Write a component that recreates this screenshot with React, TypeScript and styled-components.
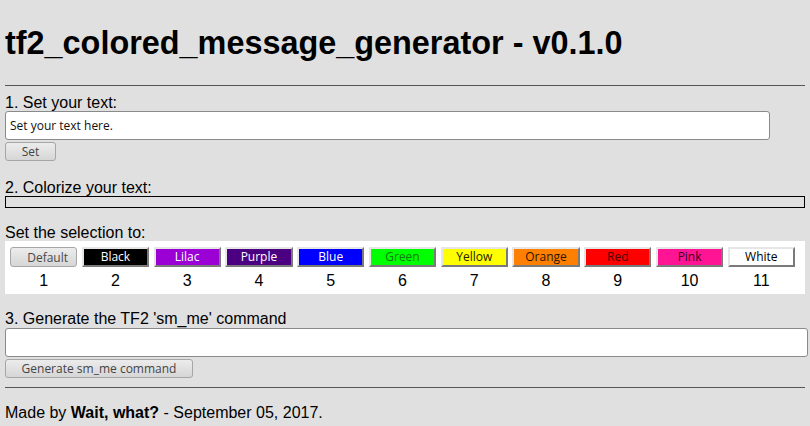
import styled, { createGlobalStyle } from 'styled-components';

const GlobalStyle = createGlobalStyle`
  html, body {
    margin: 0;
    padding: 0;
    background: #e0e0e0;
  }
  body {
    font-family: "Liberation Sans", Arial, sans-serif;
    color: #000;
  }
`;

const Page = styled.div`
  padding: 5px 5px 0;
`;

const Title = styled.h1`
  margin: 20px 0 0;
  font-size: 32.4px;
  line-height: 37px;
  font-weight: bold;
`;

const Rule = styled.hr<{ $top: number }>`
  margin: ${({ $top }) => $top}px 0 0;
  border: none;
  border-top: 1px solid #555;
  height: 0;
`;

const Label = styled.div<{ $top: number }>`
  margin-top: ${({ $top }) => $top}px;
  font-size: 16px;
  line-height: 16px;
`;

const TextInput = styled.input<{ $width: number }>`
  display: block;
  box-sizing: border-box;
  width: ${({ $width }) => $width}px;
  height: 29px;
  margin: 0;
  padding: 0 4px;
  background: #fff;
  border: 1px solid #8a8a8a;
  border-radius: 3px;
  font-family: "Open Sans", sans-serif;
  font-size: 12px;
  color: #111;
  outline: none;
`;

const GrayButton = styled.button<{ $width: number }>`
  display: block;
  box-sizing: border-box;
  width: ${({ $width }) => $width}px;
  height: 19px;
  margin: 2px 0 0;
  padding: 0;
  background: linear-gradient(#ececec, #d6d6d6);
  border: 1px solid #a6a6a6;
  border-radius: 3px;
  font-family: "Open Sans", sans-serif;
  font-size: 12px;
  color: #444;
`;

const ColorBox = styled.div`
  box-sizing: border-box;
  height: 12px;
  border: 1px solid #000;
`;

const Palette = styled.div`
  background: #fff;
  padding: 6px 10px 4px 5px;
  display: grid;
  grid-template-columns: repeat(11, 1fr);
  column-gap: 4.5px;
  row-gap: 5px;
`;

const Swatch = styled.button<{ $bg: string; $fg: string }>`
  box-sizing: border-box;
  height: 20px;
  margin: 0;
  padding: 0;
  background: ${({ $bg }) => $bg};
  color: ${({ $fg }) => $fg};
  border-style: solid;
  border-width: 2px;
  border-color: #e6e6e6 #7a7a7a #7a7a7a #e6e6e6;
  font-family: "Open Sans", sans-serif;
  font-size: 12px;
  line-height: 14px;
`;

const DefaultSwatch = styled.button`
  box-sizing: border-box;
  height: 20px;
  margin: 0;
  padding: 0 0 0 8px;
  background: linear-gradient(#ececec, #d6d6d6);
  border: 1px solid #a6a6a6;
  border-radius: 3px;
  font-family: "Open Sans", sans-serif;
  font-size: 12px;
  color: #4a4a4a;
`;

const Number = styled.div`
  text-align: center;
  font-size: 16px;
  line-height: 18px;
`;

const Footer = styled.div`
  margin-top: 17px;
  font-size: 16px;
  line-height: 16px;
`;

const colors = [
  { name: 'Black', bg: '#000000', fg: '#ffffff' },
  { name: 'Lilac', bg: '#9b00d4', fg: '#ffffff' },
  { name: 'Purple', bg: '#4b0082', fg: '#ffffff' },
  { name: 'Blue', bg: '#0000ff', fg: '#ffffff' },
  { name: 'Green', bg: '#00ff00', fg: '#127a12' },
  { name: 'Yellow', bg: '#ffff00', fg: '#222200' },
  { name: 'Orange', bg: '#ff7f00', fg: '#2a1500' },
  { name: 'Red', bg: '#ff0000', fg: '#4a0000' },
  { name: 'Pink', bg: '#ff1493', fg: '#3a0018' },
  { name: 'White', bg: '#ffffff', fg: '#000000' },
];

export default function App() {
  return (
    <Page>
      <GlobalStyle />
      <Title>tf2_colored_message_generator - v0.1.0</Title>
      <Rule $top={23} />

      <Label $top={9}>1. Set your text:</Label>
      <TextInput $width={765} defaultValue="Set your text here." />
      <GrayButton $width={51}>Set</GrayButton>

      <Label $top={19}>2. Colorize your text:</Label>
      <ColorBox />

      <Label $top={17}>Set the selection to:</Label>
      <Palette>
        <DefaultSwatch>Default</DefaultSwatch>
        {colors.map((c) => (
          <Swatch key={c.name} $bg={c.bg} $fg={c.fg}>
            {c.name}
          </Swatch>
        ))}
        {Array.from({ length: 11 }, (_, i) => (
          <Number key={i}>{i + 1}</Number>
        ))}
      </Palette>

      <Label $top={17}>3. Generate the TF2 'sm_me' command</Label>
      <TextInput $width={803} style={{ marginTop: 1 }} />
      <GrayButton $width={188}>Generate sm_me command</GrayButton>
      <Rule $top={9} />

      <Footer>
        Made by <b>Wait, what?</b> - September 05, 2017.
      </Footer>
    </Page>
  );
}
